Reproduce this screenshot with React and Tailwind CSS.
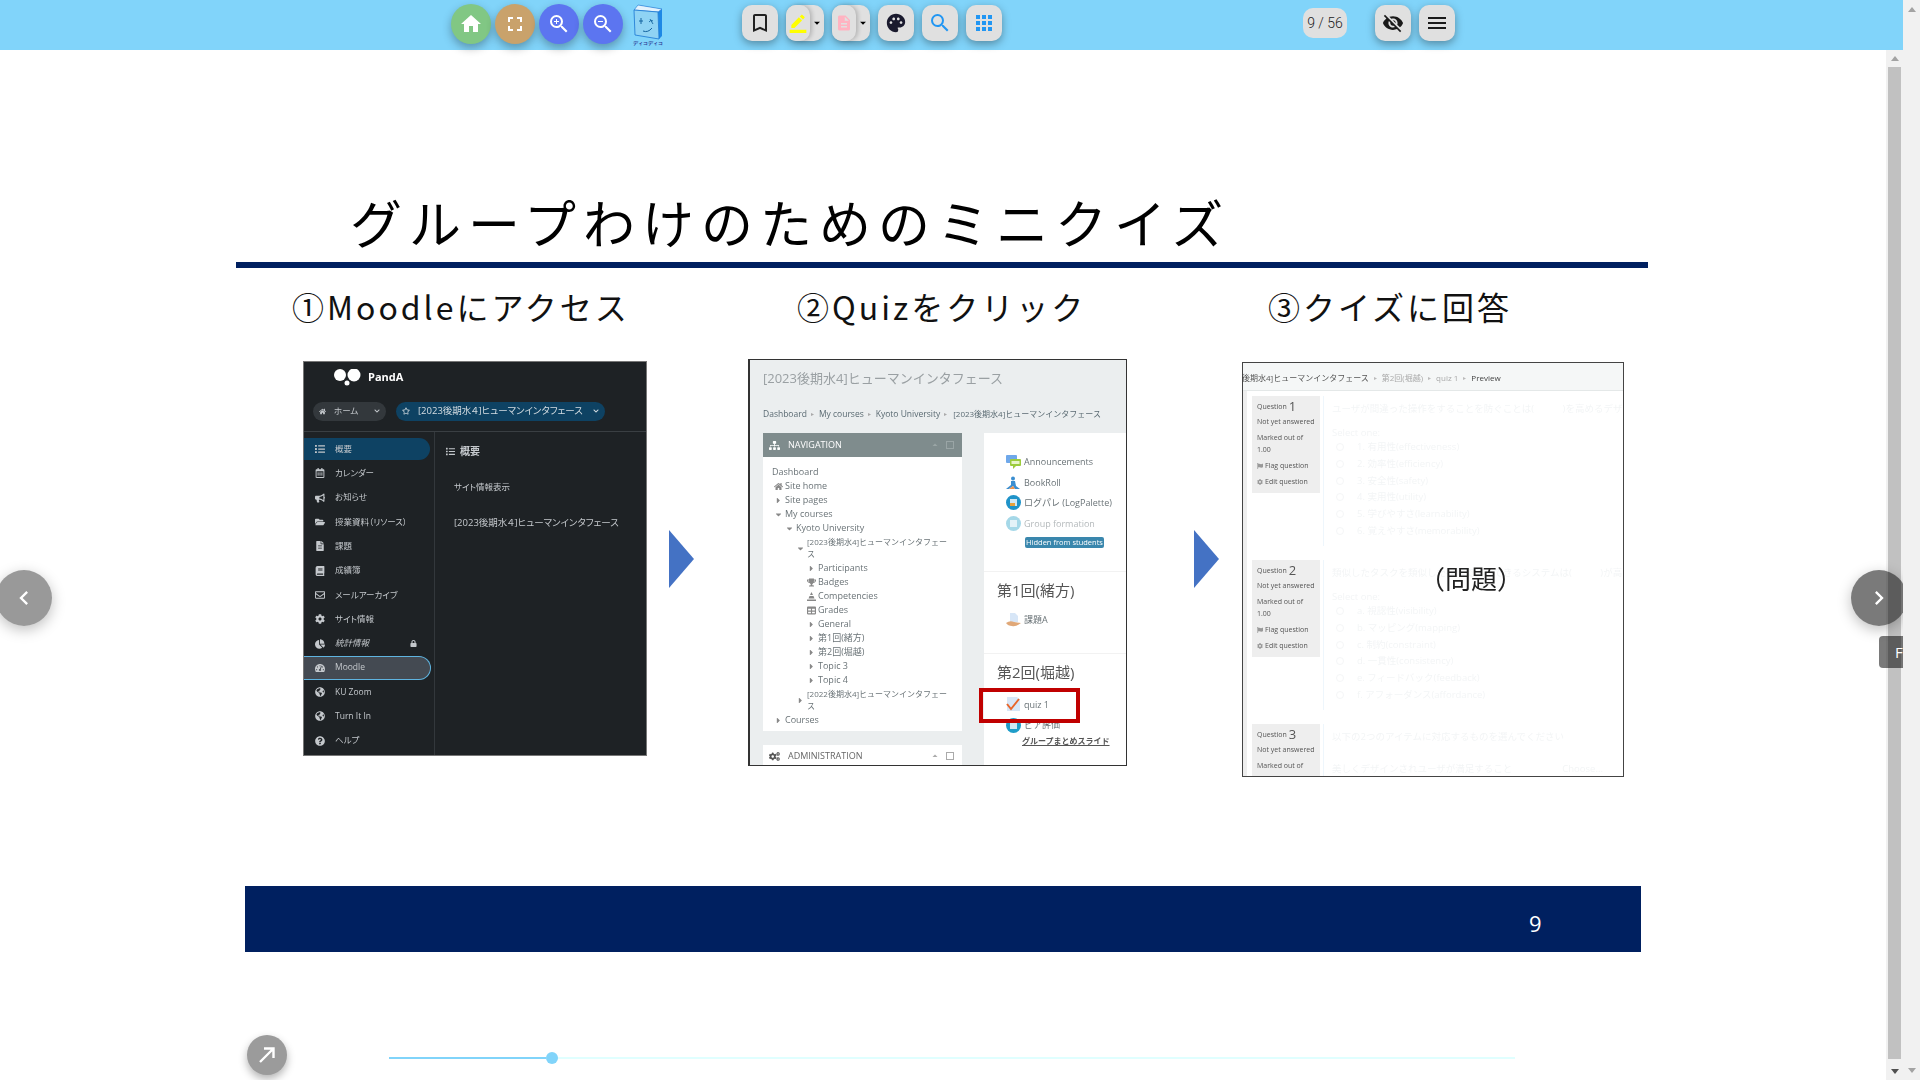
import {
  MdHome, MdFullscreen, MdZoomIn, MdZoomOut, MdBookmarkBorder, MdBorderColor, MdDescription,
  MdPalette, MdSearch, MdApps, MdVisibilityOff, MdMenu, MdChevronLeft, MdChevronRight, MdArrowDropDown, MdArrowDropUp,
} from "react-icons/md";
import {
  FaHome, FaRegStar, FaList, FaRegCalendarAlt, FaBullhorn, FaFolderOpen, FaFileAlt, FaBook, FaRegEnvelope, FaCog,
  FaChartPie, FaLock, FaTachometerAlt, FaGlobeAmericas, FaQuestionCircle, FaChevronDown, FaSitemap, FaCogs, FaTrophy,
  FaTable, FaCaretRight, FaCaretDown, FaFlag,
} from "react-icons/fa";

const circleBtn = "w-10 h-10 -mt-px rounded-full flex items-center justify-center text-white text-[24px] shadow-[0_4px_10px_rgba(0,0,0,0.3)]";
const squareBtn = "w-9 h-9 rounded-[10px] bg-[#e0e0e0] flex items-center justify-center shadow-[0_3px_8px_rgba(0,0,0,0.35)]";

function SplitBtn({ children }) {
  return (
    <div className="w-[38px] h-9 rounded-[10px] bg-[#e0e0e0] flex shadow-[0_3px_8px_rgba(0,0,0,0.35)]">
      <div className="w-[30px] h-9 rounded-[10px] bg-[#e0e0e0] flex items-center justify-center shadow-[2px_0_4px_rgba(0,0,0,0.2)]">{children}</div>
      <div className="flex-1 flex items-center justify-center"><MdArrowDropDown className="text-[14px] shrink-0 text-black" /></div>
    </div>
  );
}

function BookLogo() {
  return (
    <div className="w-[30px] h-[42px] -mt-px flex flex-col items-center ml-[10px]">
      <svg width="30" height="36" viewBox="0 0 30 36">
        <path d="M5 1 L29 5 L29 32 L26 35 L25 8 Z" fill="#1e88e5" />
        <path d="M1 6 L5 1 L29 5 L25 8 Z" fill="#e3f2fd" stroke="#1976d2" strokeWidth="0.6" />
        <path d="M1 6 L25 8 L26 35 L2 31 Z" fill="#8fd3f4" stroke="#1976d2" strokeWidth="0.8" />
        <path d="M8 14 L8 20 M6 17 L10 17" stroke="#1565a0" strokeWidth="1" />
        <path d="M16 18 Q18 15 20 17 M17 15 L20 20" stroke="#1565a0" strokeWidth="0.9" fill="none" />
        <path d="M10 27 Q15 29 19 24" stroke="#1565a0" strokeWidth="1" fill="none" />
      </svg>
      <span className="text-[5px] leading-[6px] font-bold text-[#283593] whitespace-nowrap">ディコディコ</span>
    </div>
  );
}

function Toolbar() {
  return (
    <div className="h-[50px] bg-[#81d4fa] flex items-start pt-[5px] pl-[451px] shrink-0 relative z-10">
      <div className="flex gap-1">
        <div className={`${circleBtn} bg-[#81c784]`}><MdHome /></div>
        <div className={`${circleBtn} bg-[#c9a26b]`}><MdFullscreen /></div>
        <div className={`${circleBtn} bg-[#5c75f0]`}><MdZoomIn /></div>
        <div className={`${circleBtn} bg-[#5c75f0]`}><MdZoomOut /></div>
      </div>
      <BookLogo />
      <div className="flex gap-2 ml-[79px]">
        <div className={squareBtn}><MdBookmarkBorder className="text-[24px] text-[#222]" /></div>
        <SplitBtn><MdBorderColor className="text-[20px] text-[#ffff00]" /></SplitBtn>
        <SplitBtn><MdDescription className="text-[18px] text-[#ffb3c1]" /></SplitBtn>
        <div className={squareBtn}><MdPalette className="text-[22px] text-[#1a1a2e]" /></div>
        <div className={squareBtn}><MdSearch className="text-[24px] text-[#2196f3]" /></div>
        <div className={squareBtn}><MdApps className="text-[24px] text-[#2196f3]" /></div>
      </div>
      <div className="ml-[301px] mt-[3px] w-11 h-[30px] rounded-[10px] bg-[#e0e0e0] flex items-center justify-center text-[14px] font-light text-[#222] font-['Roboto',sans-serif]">9 / 56</div>
      <div className={`${squareBtn} ml-7`}><MdVisibilityOff className="text-[22px] text-[#1a1a1a]" /></div>
      <div className={`${squareBtn} ml-2`}><MdMenu className="text-[24px] text-[#1a1a1a]" /></div>
    </div>
  );
}

const pandaRows = [
  [FaList, "概要"], [FaRegCalendarAlt, "カレンダー"], [FaBullhorn, "お知らせ"], [FaFolderOpen, "授業資料（リソース）"],
  [FaFileAlt, "課題"], [FaBook, "成績簿"], [FaRegEnvelope, "メールアーカイブ"], [FaCog, "サイト情報"], [FaChartPie, "統計情報"],
  [FaTachometerAlt, "Moodle"], [FaGlobeAmericas, "KU Zoom"], [FaGlobeAmericas, "Turn It In"], [FaQuestionCircle, "ヘルプ"],
];

function PandaShot() {
  return (
    <div className="w-[344px] h-[395px] mt-[2px] shrink-0 bg-[#1e2225] border border-[#777] text-[#c4c8cc] text-[8.5px] overflow-hidden [font-feature-settings:'palt']">
      <div className="h-[30px] flex items-center pl-[30px] gap-[7px] text-white">
        <svg width="27" height="17" viewBox="0 0 27 17" className="shrink-0">
          <circle cx="6" cy="6" r="6" fill="#fff" /><circle cx="20" cy="6" r="6.5" fill="#fff" /><circle cx="13" cy="14" r="2.5" fill="#fff" />
        </svg>
        <span className="text-[11px] font-bold">PandA</span>
      </div>
      <div className="h-[40px] pt-[8px] pb-[9px] pl-[9px] flex items-center gap-[10px] border-b border-[#3a3f43]">
        <div className="w-[73px] h-[19px] rounded-full bg-[#33383c] flex items-center px-[6px] gap-[8px]">
          <FaHome className="text-[7px]" /><span>ホーム</span><FaChevronDown className="text-[6px] ml-auto" />
        </div>
        <div className="w-[209px] h-[19px] rounded-full bg-[#0e4263] flex items-center px-[6px] gap-[8px] whitespace-nowrap text-[#d5dde2]">
          <FaRegStar className="text-[8px] shrink-0" /><span className="text-[9.5px]">[2023後期水４]ヒューマンインタフェース</span><FaChevronDown className="text-[6px] ml-auto shrink-0" />
        </div>
      </div>
      <div className="flex h-[323px]">
        <div className="w-[131px] pt-[5px] border-r border-[#33383c] shrink-0">
          {pandaRows.map(([Icon, label]) => (
            <div key={label} className="h-[24.3px] flex items-center">
              <div
                className={
                  label === "概要" ? "w-[126px] h-[22px] rounded-r-full bg-[#0e4263] flex items-center pl-[11px] gap-[10px]"
                  : label === "Moodle" ? "w-[127px] h-[24px] rounded-r-full bg-[#444a52] border-[1.5px] border-l-0 border-[#5fb4e0] flex items-center pl-[11px] gap-[10px]"
                  : "w-[126px] flex items-center pl-[11px] gap-[10px]"
                }
              >
                <Icon className="text-[10px] shrink-0" />
                <span className={label === "統計情報" ? "italic whitespace-nowrap" : "whitespace-nowrap"}>{label}</span>
                {label === "統計情報" && <FaLock className="text-[7px] ml-auto mr-[13px]" />}
              </div>
            </div>
          ))}
        </div>
        <div className="pl-[19px] pt-[9px]">
          <div className="h-[20px] -ml-[8px] flex items-center gap-[5px] text-[10px] font-bold"><FaList className="text-[9px]" />概要</div>
          <div className="mt-[20px] h-[12px] leading-[12px]">サイト情報表示</div>
          <div className="mt-[24px] h-[12px] leading-[12px] text-[9.5px] whitespace-nowrap">[2023後期水４]ヒューマンインタフェース</div>
        </div>
      </div>
    </div>
  );
}

const navRows = [
  ["Site home", 36, "home"], ["Site pages", 36, "r"], ["My courses", 36, "d"], ["Kyoto University", 47, "d"],
  ["[2023後期水4]ヒューマンインタフェー\nス", 58, "d", 2], ["Participants", 69, "r"], ["Badges", 69, "trophy"], ["Competencies", 69, "comp"],
  ["Grades", 69, "grades"], ["General", 69, "r"], ["第1回(緒方)", 69, "r"], ["第2回(堀越)", 69, "r"], ["Topic 3", 69, "r"], ["Topic 4", 69, "r"],
  ["[2022後期水4]ヒューマンインタフェー\nス", 58, "r", 2], ["Courses", 36, "r"],
];

function NavIcon({ type }) {
  const cls = "text-[9px] text-[#888] shrink-0";
  if (type === "home") return <FaHome className={cls} />;
  if (type === "r") return <FaCaretRight className={cls} />;
  if (type === "d") return <FaCaretDown className={cls} />;
  if (type === "trophy") return <FaTrophy className={cls} />;
  if (type === "comp") return (
    <svg width="9" height="9" viewBox="0 0 9 9" className="shrink-0"><path d="M4.5 0 L6 3 H3 Z M2.5 4 H6.5 L7.5 6.5 H1.5 Z M0 7.5 H9 V9 H0 Z" fill="#888" /></svg>
  );
  return <FaTable className={cls} />;
}

// small activity icons of the Moodle course page
const activityIcons = {
  announcements: (
    <svg width="15" height="14" viewBox="0 0 15 14"><rect x="0" y="0" width="11" height="8" rx="1" fill="#6fa8ea" /><rect x="4" y="4" width="11" height="7" rx="1" fill="#9ccc3c" /><path d="M7 11 V14 L10 11 Z" fill="#9ccc3c" /><rect x="5.5" y="6" width="8" height="3" fill="#e8f5c8" /></svg>
  ),
  book: (
    <svg width="15" height="14" viewBox="0 0 15 14"><circle cx="7" cy="2.5" r="2" fill="#3b8ed0" /><path d="M5 5 H9 L10 10 L14 13 H9 L7 10 L3 13 H0 L5 9 Z" fill="#3b8ed0" /><path d="M3 13 L7 10 L9 13 Z" fill="#f0924a" /></svg>
  ),
  log: (
    <svg width="15" height="15" viewBox="0 0 15 15"><circle cx="7.5" cy="7.5" r="7.5" fill="#1f93c9" /><rect x="4" y="4" width="7" height="7" fill="#cfe8f5" /><rect x="4" y="8" width="5" height="3" fill="#e8a23c" /></svg>
  ),
  group: (
    <svg width="15" height="15" viewBox="0 0 15 15"><circle cx="7.5" cy="7.5" r="7.5" fill="#a5d8e8" /><rect x="4" y="4" width="7" height="7" fill="#e3f2f8" /></svg>
  ),
  assign: (
    <svg width="15" height="14" viewBox="0 0 15 14"><path d="M4 0 H9 L12 3 V9 H4 Z" fill="#d7e6f7" /><path d="M0 10 Q4 7 8 9 L15 10 Q10 14 6 13 Q2 13 0 10 Z" fill="#e0a878" /></svg>
  ),
  quiz: (
    <svg width="15" height="15" viewBox="0 0 15 15"><path d="M1 0 H11 L14 3 V14 H1 Z" fill="#d7e6f7" /><path d="M1 7 L5 12 L13 2" stroke="#e8652a" strokeWidth="2" fill="none" /></svg>
  ),
  peer: (
    <svg width="15" height="15" viewBox="0 0 15 15"><circle cx="7.5" cy="7.5" r="7.5" fill="#1f9dc9" /><rect x="4" y="4" width="7" height="7" fill="#cfe8f5" /></svg>
  ),
};

function ActivityRow({ icon, faded, children }) {
  return (
    <div className={`h-[20.4px] flex items-center gap-[3px] ${faded ? "text-[#b4b9bb]" : ""}`}>
      <span className="w-[15px] h-[15px] shrink-0 flex items-center">{activityIcons[icon]}</span>
      <span className="whitespace-nowrap">{children}</span>
    </div>
  );
}

function MoodleShot() {
  return (
    <div className="w-[379px] h-[407px] shrink-0 bg-[#ebeeef] border border-[#333] border-l-[2px] text-[#6a7377] text-[9px] overflow-hidden relative">
      <div className="h-[38px] pl-[13px] pt-[8px] text-[13px] leading-[20px] text-[#9aa0a3] whitespace-nowrap">[2023後期水4]ヒューマンインタフェース</div>
      <div className="h-[22px] mt-[5px] pl-[13px] flex items-center gap-[4px] text-[#5a6a72] whitespace-nowrap text-[8.5px]">
        <span>Dashboard</span><span className="text-[#aaa] text-[6px]">▸</span><span className="ml-[1px]">My courses</span><span className="text-[#aaa] text-[6px]">▸</span><span className="ml-[1px]">Kyoto University</span><span className="text-[#aaa] text-[6px]">▸</span><span className="ml-[2px] text-[8px]">[2023後期水4]ヒューマンインタフェース</span>
      </div>
      <div className="flex mt-[8px] pl-[13px]">
        <div className="w-[199px] shrink-0">
          <div className="h-[24px] bg-[#7f8c8d] text-white flex items-center pl-[6px] gap-[5px]">
            <FaSitemap className="text-[11px]" /><span className="ml-[3px]">NAVIGATION</span>
            <MdArrowDropUp className="ml-auto text-[#9aa5a6] text-[12px]" /><span className="w-[8px] h-[8px] border border-[#9aa5a6] mr-[8px]" />
          </div>
          <div className="bg-white h-[274px] pt-[8px]">
            <div className="h-[14px] leading-[14px] pl-[9px]">Dashboard</div>
            {navRows.map(([label, x, icon, lines]) => (
              <div key={label} className={lines ? "h-[26px] flex items-center" : "h-[14px] flex items-center"}>
                <div className={`w-[12px] flex justify-end shrink-0 ${x === 36 ? "ml-[8px]" : x === 47 ? "ml-[19px]" : x === 58 ? "ml-[30px]" : "ml-[41px]"}`}>
                  <NavIcon type={icon} />
                </div>
                <span className={lines ? "ml-[2px] whitespace-pre text-[8px] leading-[12px]" : "ml-[2px] whitespace-nowrap"}>{label}</span>
              </div>
            ))}
          </div>
          <div className="h-[22px] mt-[14px] bg-white flex items-center pl-[6px] gap-[5px]">
            <FaCogs className="text-[11px] text-[#555]" /><span className="ml-[3px] text-[#666]">ADMINISTRATION</span>
            <MdArrowDropUp className="ml-auto text-[#aaa] text-[12px]" /><span className="w-[8px] h-[8px] border border-[#aaa] mr-[8px]" />
          </div>
        </div>
        <div className="ml-[22px] flex-1 bg-white h-[333px] pl-[22px] pt-[19px]">
          <ActivityRow icon="announcements">Announcements</ActivityRow>
          <ActivityRow icon="book">BookRoll</ActivityRow>
          <ActivityRow icon="log">ログパレ (LogPalette)</ActivityRow>
          <ActivityRow icon="group" faded>Group formation</ActivityRow>
          <div className="ml-[19px] mt-[3px] w-[79px] h-[11px] bg-[#3a87ad] rounded-[2px] text-white text-[7.5px] leading-[11px] text-center whitespace-nowrap">Hidden from students</div>
          <div className="-ml-[22px] mt-[23px] border-t border-[#f2f2f2] pl-[13px] h-[82px]">
            <div className="mt-[8px] text-[15px] leading-[20px] text-[#555]">第1回(緒方)</div>
            <div className="mt-[10px] pl-[9px]"><ActivityRow icon="assign">課題A</ActivityRow></div>
          </div>
          <div className="-ml-[22px] border-t border-[#f2f2f2] pl-[13px]">
            <div className="mt-[8px] text-[15px] leading-[20px] text-[#555]">第2回(堀越)</div>
            <div className="mt-[13px] pl-[9px]"><ActivityRow icon="quiz">quiz 1</ActivityRow></div>
            <div className="pl-[9px]"><ActivityRow icon="peer">ピア評価</ActivityRow></div>
            <div className="ml-[25px] underline text-[#555] text-[8px] font-semibold whitespace-nowrap leading-[12px]">グループまとめスライド</div>
          </div>
        </div>
      </div>
      {/* red highlight box around quiz 1 */}
      <div className="absolute left-[229px] top-[328px] w-[101px] h-[35px] border-[4px] border-[#c00000]" />
    </div>
  );
}

const questions = [
  {
    n: 1,
    q: "ユーザが間違った操作をすることを防ぐことは(　　　)を高めるデザインである",
    opts: ["1. 有用性(effectiveness)", "2. 効率性(efficiency)", "3. 安全性(safety)", "4. 実用性(utility)", "5. 学びやすさ(learnability)", "6. 覚えやすさ(memorability)"],
  },
  {
    n: 2,
    q: "類似したタスクを類似した操作で実行できるシステムは(　　　)が高い",
    opts: ["a. 視認性(visibility)", "b. マッピング(mapping)", "c. 制約(constraint)", "d. 一貫性(consistency)", "e. フィードバック(feedback)", "f. アフォーダンス(affordance)"],
  },
];

function InfoBox({ n, short }) {
  return (
    <div className={`w-[68px] shrink-0 bg-[#eeeeee] pl-[5px] pt-[4px] text-[#555] text-[7px] ${short ? "h-[53px]" : "h-[97px]"}`}>
      <div className="h-[14px] flex items-center gap-[2px]">Question <span className="text-[13px]">{n}</span></div>
      <div className="mt-[2px] leading-[12px] whitespace-nowrap">Not yet answered</div>
      <div className="mt-[4px] leading-[12px]">Marked out of</div>
      {!short && (
        <>
          <div className="leading-[12px]">1.00</div>
          <div className="mt-[4px] leading-[12px] flex items-center gap-[2px] whitespace-nowrap"><FaFlag className="text-[6px] text-[#999]" />Flag question</div>
          <div className="mt-[4px] leading-[12px] flex items-center gap-[2px] whitespace-nowrap"><FaCog className="text-[6px] text-[#999]" />Edit question</div>
        </>
      )}
    </div>
  );
}

function QuizShot() {
  return (
    <div className="w-[382px] h-[415px] mt-[3px] shrink-0 bg-white border border-[#444] overflow-hidden relative text-[9px]">
      <div className="h-[28px] pt-[3px] bg-[#f5f7f7] border-b border-[#e4e8e8] flex items-center gap-[5px] whitespace-nowrap text-[#555] text-[8px]">
        <span className="-ml-[1px]">後期水4]ヒューマンインタフェース</span><span className="text-[#bbb] text-[6px]">▸</span>
        <span className="text-[#aaa]">第2回(堀越)</span><span className="text-[#bbb] text-[6px]">▸</span>
        <span className="text-[#aaa]">quiz 1</span><span className="text-[#bbb] text-[6px]">▸</span><span className="text-[#444]">Preview</span>
      </div>
      <div className="border-l-[4px] border-[#eeeeee] pl-[5px] pt-[5px]">
        {questions.map((item) => (
          <div key={item.n} className="flex h-[164px] gap-[3px]">
            <InfoBox n={item.n} />
            <div className="flex-1 h-[150px] border-l border-[#eef6fc] pl-[8px] pt-[7px] text-[#f3f5f6] text-[9.5px] whitespace-nowrap overflow-hidden">
              <div className="leading-[12px]">{item.q}</div>
              <div className="mt-[12px] leading-[12px]">Select one:</div>
              {item.opts.map((o) => (
                <div key={o} className="h-[16.7px] flex items-center">
                  <span className="w-[8px] h-[8px] rounded-full border border-[#f5f6f7] ml-[4px] mr-[13px] shrink-0" />{o}
                </div>
              ))}
            </div>
          </div>
        ))}
        <div className="flex gap-[3px]">
          <InfoBox n={3} short />
          <div className="flex-1 border-l border-[#eef6fc] pl-[8px] pt-[7px] text-[#f3f5f6] text-[9.5px] whitespace-nowrap overflow-hidden">
            <div className="leading-[12px]">以下の2つのアイテムに対応するものを選んでください</div>
            <div className="mt-[20px] leading-[12px] flex">美しくデザインされユーザが満足すること<span className="ml-[50px]">Choose...</span></div>
          </div>
        </div>
      </div>
      {/* label laid over the faded question text */}
      <div className="absolute left-[176px] top-[199px] text-[26px] leading-[34px] text-[#222] whitespace-nowrap">（問題）</div>
    </div>
  );
}

function NextArrow({ className }) {
  return (
    <svg width="25" height="58" viewBox="0 0 25 58" className={`shrink-0 mt-[171px] ${className}`}>
      <path d="M0 0 L25 29 L0 58 Z" fill="#4472c4" />
    </svg>
  );
}

function Slide() {
  return (
    <div className="ml-[236px] w-[1412px] font-['Noto_Sans_CJK_JP',sans-serif]">
      <div className="mt-[136px] h-[76px] pl-[114px] text-[52px] leading-[72px] tracking-[7px] whitespace-nowrap text-black font-normal">グループわけのためのミニクイズ</div>
      <div className="h-[6px] bg-[#002060]" />
      <div className="mt-[16px] h-[44px] pl-[56px] grid grid-cols-[505px_471px_1fr] text-[32px] leading-[44px] tracking-[3px] font-normal text-[#111] whitespace-nowrap">
        <div>①Moodleにアクセス</div>
        <div>②Quizをクリック</div>
        <div>③クイズに回答</div>
      </div>
      <div className="mt-[31px] h-[418px] pl-[67px] flex items-start font-['Open_Sans','Noto_Sans_CJK_JP',sans-serif] blur-[0.3px]">
        <PandaShot />
        <NextArrow className="ml-[22px]" />
        <div className="ml-[54px]"><MoodleShot /></div>
        <NextArrow className="ml-[67px]" />
        <div className="ml-[23px]"><QuizShot /></div>
      </div>
      <div className="mt-[109px] ml-[9px] w-[1396px] h-[66px] pt-[9px] bg-[#002060] flex items-center text-white">
        <span className="ml-[1284px] text-[22px] font-['Open_Sans',sans-serif]">9</span>
      </div>
      <div className="mt-[83px] ml-[11px] h-[40px] flex items-center">
        <div className="w-10 h-10 rounded-full bg-[#9b9b9b] flex items-center justify-center shadow-[0_4px_8px_rgba(0,0,0,0.3)]">
          <svg width="20" height="20" viewBox="0 0 20 20" fill="none" stroke="#fff" strokeWidth="2.4"><path d="M3 17 L16 4 M7 3.5 H16.5 V13" /></svg>
        </div>
        <div className="ml-[102px] mt-[6px] w-[1126px] h-[2px] bg-[#e0ffff] flex items-center">
          <div className="w-[157px] h-[2px] bg-[#81d4fa]" />
          <div className="w-3 h-3 rounded-full bg-[#81d4fa] shrink-0" />
        </div>
      </div>
    </div>
  );
}

function Scrollbar() {
  return (
    <div className="w-[17px] shrink-0 bg-[#f1f1f1] flex flex-col items-center">
      <div className="h-[17px] flex items-center justify-center"><span className="w-0 h-0 border-x-[4px] border-x-transparent border-b-[5px] border-b-[#a3a3a3]" /></div>
      <div className="flex-1 w-[13px] mb-[4px] bg-[#c1c1c1]" />
      <div className="h-[17px] flex items-center justify-center"><span className="w-0 h-0 border-x-[4px] border-x-transparent border-t-[5px] border-t-[#505050]" /></div>
    </div>
  );
}

export default function App() {
  return (
    <div className="w-[1920px] h-[1080px] flex overflow-hidden bg-white">
      <div className="w-[1903px] h-full flex flex-col relative overflow-hidden">
        <Toolbar />
        <div className="flex flex-1 min-h-0">
          <div className="flex-1 overflow-hidden"><Slide /></div>
          <Scrollbar />
        </div>
        {/* page-turn controls float over the slide */}
        <div className="absolute left-[-4px] top-[570px] w-14 h-14 rounded-full bg-[rgba(0,0,0,0.4)] text-white flex items-center justify-center text-[28px] shadow-[0_4px_14px_rgba(0,0,0,0.25)]"><MdChevronLeft /></div>
        <div className="absolute left-[1851px] top-[570px] w-14 h-14 rounded-full bg-[rgba(0,0,0,0.52)] text-white flex items-center justify-center text-[28px] shadow-[0_4px_14px_rgba(0,0,0,0.25)]"><MdChevronRight /></div>
        <div className="absolute left-[1879px] top-[636px] w-6 h-8 rounded-l-[4px] bg-[rgba(0,0,0,0.52)] text-white text-[15px] leading-8 pl-4 overflow-hidden font-['Open_Sans',sans-serif]">F</div>
      </div>
      <div className="w-[17px] shrink-0 bg-[#f1f1f1] flex flex-col justify-between items-center py-[7px]">
        <span className="w-0 h-0 border-x-[4px] border-x-transparent border-b-[5px] border-b-[#a3a3a3]" />
        <span className="w-0 h-0 border-x-[4px] border-x-transparent border-t-[5px] border-t-[#a3a3a3]" />
      </div>
    </div>
  );
}
